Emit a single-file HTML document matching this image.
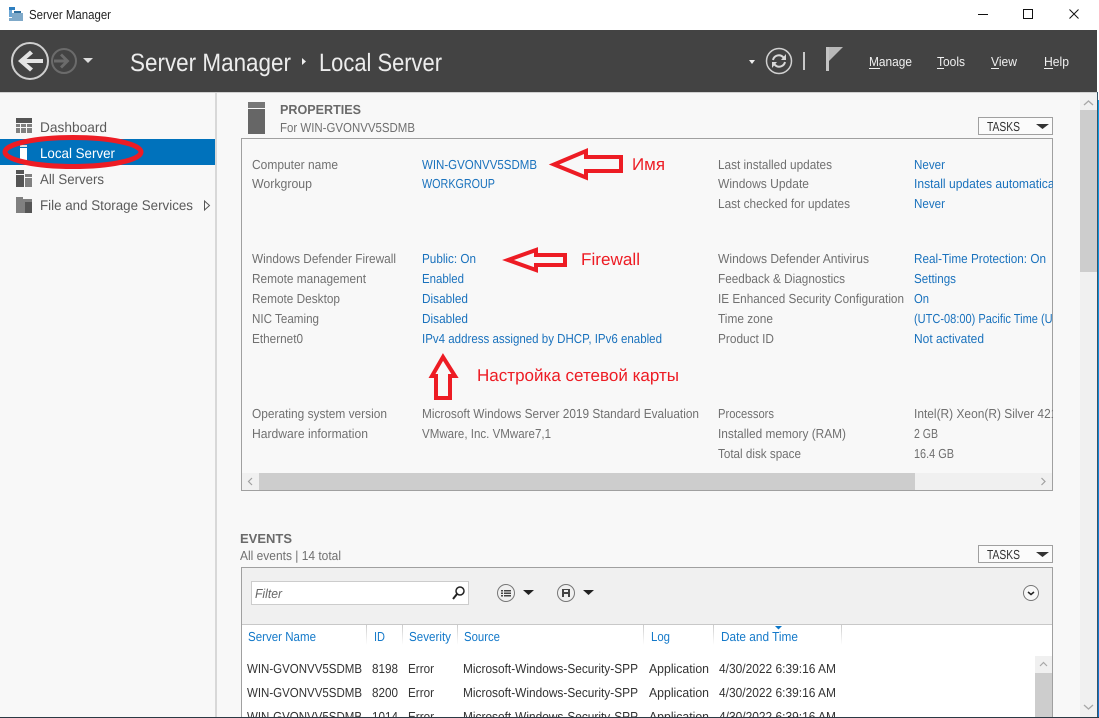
<!DOCTYPE html>
<html><head><meta charset="utf-8"><title>Server Manager</title>
<style>
html,body{margin:0;padding:0;background:#fff;width:1099px;height:718px;overflow:hidden}
svg{display:block}
text{font-family:"Liberation Sans","DejaVu Sans",sans-serif;font-size:13px;text-rendering:geometricPrecision}
.g{fill:#707070}.b{fill:#1a72bd}.d{fill:#333}.h{fill:#1479c9}
text.r{fill:#ed1c24;font-size:17px}
.a{fill:none;stroke:#ed1c24;stroke-width:4}
text.s{font-size:14px;fill:#5a5a5a}
</style></head><body>
<svg width="1099" height="718" viewBox="0 0 1099 718" xmlns="http://www.w3.org/2000/svg">
<defs><clipPath id="c"><rect x="242" y="139" width="811" height="334"/></clipPath>
<clipPath id="t"><rect x="242" y="626" width="793" height="91"/></clipPath>
<linearGradient id="f" x1="0" y1="0" x2="0" y2="1"><stop offset="0" stop-color="#ccc"/><stop offset="1" stop-color="#fff"/></linearGradient>
<linearGradient id="e" x1="0" y1="0" x2="0" y2="1"><stop offset="0" stop-color="#0aa0e8"/><stop offset="1" stop-color="#1470c8"/></linearGradient></defs>
<rect width="1099" height="718" fill="#fff"/>
<!-- title bar -->
<path d="M9 7h6v3h-6z" fill="#2f7fc0"/><path d="M9 10h3v7H9z" fill="#6aa5d4"/><path d="M12 13h11v8H9v-3h3z" fill="#7fa9c9"/><path d="M14 11h7v2h-7z" fill="#2f6f9f"/>
<text x="29" y="19" fill="#222" textLength="82" lengthAdjust="spacingAndGlyphs">Server Manager</text>
<path d="M978 14.500h10" stroke="#111" stroke-width="1"/>
<rect x="1023.500" y="9.500" width="9" height="9" fill="none" stroke="#111"/>
<path d="M1069.500 9.500l9 9M1078.500 9.500l-9 9" stroke="#111" fill="none"/>
<!-- header -->
<rect x="0" y="30" width="1097" height="62" fill="#434343"/>
<circle cx="30" cy="61" r="18" fill="none" stroke="#cfcfcf" stroke-width="2"/>
<path d="M18 61L30 50.500L33 53.500L26.500 59H43V63H26.500L33 68.500L30 71.500z" fill="#e4e4e4"/>
<circle cx="64" cy="61" r="12" fill="none" stroke="#6b6b6b" stroke-width="2"/>
<path d="M54 59.500h10l-4-4 2-2 7.500 7.500-7.500 7.500-2-2 4-4h-10z" fill="#6b6b6b"/>
<path d="M83 58h10l-5 5z" fill="#ddd"/>
<text x="130" y="71" fill="#ececec" style="font-size:25px" textLength="161" lengthAdjust="spacingAndGlyphs">Server Manager</text>
<path d="M302 58l4 3.500-4 3.500z" fill="#eee"/>
<text x="319" y="71" fill="#ececec" style="font-size:25px" textLength="123" lengthAdjust="spacingAndGlyphs">Local Server</text>
<path d="M749 60h6l-3 4z" fill="#eee"/>
<circle cx="779" cy="61" r="12.500" fill="none" stroke="#d0d0d0" stroke-width="1.500"/>
<path d="M773 60a6 6 0 0 1 10-3l2 2M785 62a6 6 0 0 1-10 3l-2-2" fill="none" stroke="#d8d8d8" stroke-width="2"/>
<path d="M786 54v6h-5zM772 68v-6h5z" fill="#d8d8d8"/>
<rect x="803" y="52" width="2" height="18" fill="#c8c8c8"/>
<rect x="826" y="47" width="3" height="24" fill="#c4c4c4"/><path d="M829 47h14l-14 14z" fill="#b8b8b8"/>
<g fill="#f0f0f0">
<text x="869" y="66" fill="#f0f0f0" textLength="43" lengthAdjust="spacingAndGlyphs">Manage</text>
<text x="937" y="66" fill="#f0f0f0" textLength="28" lengthAdjust="spacingAndGlyphs">Tools</text>
<text x="991" y="66" fill="#f0f0f0" textLength="26" lengthAdjust="spacingAndGlyphs">View</text>
<text x="1044" y="66" fill="#f0f0f0" textLength="25" lengthAdjust="spacingAndGlyphs">Help</text>
<rect x="869" y="68" width="11" height="1"/><rect x="937" y="68" width="7" height="1"/><rect x="991" y="68" width="8" height="1"/><rect x="1044" y="68" width="9" height="1"/>
</g>
<!-- sidebar -->
<rect x="0" y="92" width="215" height="626" fill="#f8f8f8"/>
<rect x="215" y="92" width="2" height="626" fill="#d8d8d8"/>
<rect x="217" y="92" width="880" height="626" fill="#f8f8f8"/>
<rect x="0" y="92" width="1097" height="1" fill="#d0d0d0"/>
<rect x="16" y="118" width="16" height="5" fill="#555"/><path d="M16 124h4v3h-4zM21 124h5v3h-5zM27 124h5v3h-5zM16 128h4v5h-4zM21 128h5v5h-5zM27 128h5v5h-5z" fill="#808080"/>
<rect x="0" y="139" width="215" height="26" fill="#0072bc"/>
<rect x="20" y="148" width="7" height="12" fill="#fff"/><rect x="20" y="145" width="7" height="2" fill="#e0e0e0"/>
<rect x="16" y="170" width="8" height="4" fill="#555"/><rect x="16" y="175" width="8" height="12" fill="#555"/><rect x="25" y="174" width="7" height="3" fill="#808080"/><rect x="25" y="178" width="7" height="9" fill="#808080"/>
<path d="M16 197h7v2h9v7h-7v7h-9z" fill="#808080"/><path d="M25 202h7v11h-7z" fill="#555"/>
<text class="s" x="40" y="132" textLength="67" lengthAdjust="spacingAndGlyphs">Dashboard</text>
<text x="40" y="158" style="font-size:14px" fill="#fff" textLength="75" lengthAdjust="spacingAndGlyphs">Local Server</text>
<text class="s" x="40" y="184" textLength="64" lengthAdjust="spacingAndGlyphs">All Servers</text>
<text class="s" x="40" y="210" textLength="153" lengthAdjust="spacingAndGlyphs">File and Storage Services</text>
<path d="M204.500 201l5 4.500-5 4.500z" fill="none" stroke="#555"/>
<ellipse cx="73" cy="152" rx="68" ry="14.500" fill="none" stroke="#ed1c24" stroke-width="5"/>
<!-- main scrollbar -->
<rect x="1080" y="93" width="17" height="625" fill="#f0f0f0"/>
<rect x="1080" y="110" width="17" height="162" fill="#cdcdcd"/>
<path d="M1084 105l4.500-4 4.500 4M1084 705l4.500 4 4.500-4" fill="none" stroke="#a8a8a8" stroke-width="1.300"/>
<!-- properties -->
<rect x="248" y="102" width="17" height="6" fill="#777"/><rect x="248" y="109" width="17" height="25" fill="#666"/>
<text x="280" y="114" fill="#6a6a6a" font-weight="bold" textLength="81" lengthAdjust="spacingAndGlyphs">PROPERTIES</text>
<text class="g" x="280" y="132" textLength="135" lengthAdjust="spacingAndGlyphs">For WIN-GVONVV5SDMB</text>
<rect x="978.500" y="117.500" width="74" height="17" fill="#fbfbfb" stroke="#a0a0a0"/>
<text x="987" y="131" fill="#333" textLength="33" lengthAdjust="spacingAndGlyphs">TASKS</text>
<path d="M1036 124h13l-6.500 5z" fill="#333"/>
<rect x="241.500" y="138.500" width="811" height="352" fill="#f8f8f8" stroke="#a0a0a0"/>
<g clip-path="url(#c)">
<text class="g" x="252" y="169" textLength="86" lengthAdjust="spacingAndGlyphs">Computer name</text>
<text class="g" x="252" y="188" textLength="60" lengthAdjust="spacingAndGlyphs">Workgroup</text>
<text class="g" x="252" y="263" textLength="144" lengthAdjust="spacingAndGlyphs">Windows Defender Firewall</text>
<text class="g" x="252" y="283" textLength="114" lengthAdjust="spacingAndGlyphs">Remote management</text>
<text class="g" x="252" y="303" textLength="88" lengthAdjust="spacingAndGlyphs">Remote Desktop</text>
<text class="g" x="252" y="323" textLength="67" lengthAdjust="spacingAndGlyphs">NIC Teaming</text>
<text class="g" x="252" y="343" textLength="51" lengthAdjust="spacingAndGlyphs">Ethernet0</text>
<text class="g" x="252" y="418" textLength="135" lengthAdjust="spacingAndGlyphs">Operating system version</text>
<text class="g" x="252" y="438" textLength="116" lengthAdjust="spacingAndGlyphs">Hardware information</text>
<text class="b" x="422" y="169" textLength="115" lengthAdjust="spacingAndGlyphs">WIN-GVONVV5SDMB</text>
<text class="b" x="422" y="188" textLength="73" lengthAdjust="spacingAndGlyphs">WORKGROUP</text>
<text class="b" x="422" y="263" textLength="54" lengthAdjust="spacingAndGlyphs">Public: On</text>
<text class="b" x="422" y="283" textLength="42" lengthAdjust="spacingAndGlyphs">Enabled</text>
<text class="b" x="422" y="303" textLength="46" lengthAdjust="spacingAndGlyphs">Disabled</text>
<text class="b" x="422" y="323" textLength="46" lengthAdjust="spacingAndGlyphs">Disabled</text>
<text class="b" x="422" y="343" textLength="240" lengthAdjust="spacingAndGlyphs">IPv4 address assigned by DHCP, IPv6 enabled</text>
<text class="g" x="422" y="418" textLength="277" lengthAdjust="spacingAndGlyphs">Microsoft Windows Server 2019 Standard Evaluation</text>
<text class="g" x="422" y="438" textLength="129" lengthAdjust="spacingAndGlyphs">VMware, Inc. VMware7,1</text>
<text class="g" x="718" y="169" textLength="114" lengthAdjust="spacingAndGlyphs">Last installed updates</text>
<text class="g" x="718" y="188" textLength="91" lengthAdjust="spacingAndGlyphs">Windows Update</text>
<text class="g" x="718" y="208" textLength="132" lengthAdjust="spacingAndGlyphs">Last checked for updates</text>
<text class="g" x="718" y="263" textLength="151" lengthAdjust="spacingAndGlyphs">Windows Defender Antivirus</text>
<text class="g" x="718" y="283" textLength="127" lengthAdjust="spacingAndGlyphs">Feedback &amp; Diagnostics</text>
<text class="g" x="718" y="303" textLength="186" lengthAdjust="spacingAndGlyphs">IE Enhanced Security Configuration</text>
<text class="g" x="718" y="323" textLength="55" lengthAdjust="spacingAndGlyphs">Time zone</text>
<text class="g" x="718" y="343" textLength="56" lengthAdjust="spacingAndGlyphs">Product ID</text>
<text class="g" x="718" y="418" textLength="56" lengthAdjust="spacingAndGlyphs">Processors</text>
<text class="g" x="718" y="438" textLength="128" lengthAdjust="spacingAndGlyphs">Installed memory (RAM)</text>
<text class="g" x="718" y="458" textLength="83" lengthAdjust="spacingAndGlyphs">Total disk space</text>
<text class="b" x="914" y="169" textLength="31" lengthAdjust="spacingAndGlyphs">Never</text>
<text class="b" x="914" y="188" textLength="152" lengthAdjust="spacingAndGlyphs">Install updates automatically</text>
<text class="b" x="914" y="208" textLength="31" lengthAdjust="spacingAndGlyphs">Never</text>
<text class="b" x="914" y="263" textLength="132" lengthAdjust="spacingAndGlyphs">Real-Time Protection: On</text>
<text class="b" x="914" y="283" textLength="42" lengthAdjust="spacingAndGlyphs">Settings</text>
<text class="b" x="914" y="303" textLength="15" lengthAdjust="spacingAndGlyphs">On</text>
<text class="b" x="914" y="323" textLength="146" lengthAdjust="spacingAndGlyphs">(UTC-08:00) Pacific Time (US</text>
<text class="b" x="914" y="343" textLength="70" lengthAdjust="spacingAndGlyphs">Not activated</text>
<text class="g" x="914" y="418" textLength="150" lengthAdjust="spacingAndGlyphs">Intel(R) Xeon(R) Silver 4214</text>
<text class="g" x="914" y="438" textLength="24" lengthAdjust="spacingAndGlyphs">2 GB</text>
<text class="g" x="914" y="458" textLength="40" lengthAdjust="spacingAndGlyphs">16.4 GB</text>
</g>
<rect x="242" y="473" width="810" height="17" fill="#f0f0f0"/>
<rect x="259" y="473" width="656" height="17" fill="#cdcdcd"/>
<path d="M252 478l-3.500 3.500 3.500 3.500M1041.500 478l3.500 3.500-3.500 3.500" fill="none" stroke="#a0a0a0" stroke-width="1.200"/>
<!-- annotations -->
<path class="a" d="M554 164.500L586 151V157H621V171H586V177.500z"/>
<path class="a" d="M508 260L536 250V255H565V265H536V270z"/>
<path class="a" d="M443 357L432 376H436V398H450V376H455z"/>
<text class="r" x="632" y="170" textLength="33" lengthAdjust="spacingAndGlyphs">Имя</text>
<text class="r" x="581" y="265" textLength="59" lengthAdjust="spacingAndGlyphs">Firewall</text>
<text class="r" x="477" y="381" textLength="202" lengthAdjust="spacingAndGlyphs">Настройка сетевой карты</text>
<!-- events -->
<text x="240" y="543" fill="#6a6a6a" font-weight="bold" textLength="52" lengthAdjust="spacingAndGlyphs">EVENTS</text>
<text class="g" x="240" y="560" textLength="101" lengthAdjust="spacingAndGlyphs">All events | 14 total</text>
<rect x="978.500" y="545.500" width="74" height="17" fill="#fbfbfb" stroke="#a0a0a0"/>
<text x="987" y="559" fill="#333" textLength="33" lengthAdjust="spacingAndGlyphs">TASKS</text>
<path d="M1036 552h13l-6.500 5z" fill="#333"/>
<rect x="241.500" y="567.500" width="811" height="160" fill="#fff" stroke="#a0a0a0"/>
<rect x="242" y="568" width="810" height="57" fill="#f0f0f0"/>
<rect x="242" y="624" width="810" height="1" fill="#c8c8c8"/>
<rect x="251.500" y="581.500" width="217" height="23" fill="#fff" stroke="#ccc"/>
<text x="255" y="598" fill="#666" font-style="italic" textLength="27" lengthAdjust="spacingAndGlyphs">Filter</text>
<circle cx="460" cy="591" r="4" fill="none" stroke="#222" stroke-width="1.500"/><path d="M457 594l-4 5" stroke="#222" stroke-width="2"/>
<circle cx="506" cy="593" r="8.500" fill="none" stroke="#777"/><path d="M501 590h2v1.500h-2zM504 590h7v1.500h-7zM501 592.500h2v1.500h-2zM504 592.500h7v1.500h-7zM501 595h2v1.500h-2zM504 595h7v1.500h-7z" fill="#444"/>
<path d="M523 590h11l-5.500 5z" fill="#222"/>
<circle cx="566" cy="593" r="8.500" fill="none" stroke="#777"/><path d="M562 589h8v8h-8z" fill="#444"/><path d="M564 590h4v2h-4zM564 594h4v3h-4z" fill="#f0f0f0"/>
<path d="M583 590h11l-5.500 5z" fill="#222"/>
<circle cx="1031" cy="593" r="7.500" fill="#f8f8f8" stroke="#777"/><path d="M1028 592l3 2.500 3-2.500" fill="none" stroke="#222" stroke-width="1.500"/>
<g fill="url(#f)">
<rect x="366" y="625" width="1" height="20"/><rect x="402" y="625" width="1" height="20"/><rect x="457" y="625" width="1" height="20"/><rect x="643" y="625" width="1" height="20"/><rect x="713" y="625" width="1" height="20"/><rect x="841" y="625" width="1" height="20"/>
</g>
<text class="h" x="248" y="641" textLength="68" lengthAdjust="spacingAndGlyphs">Server Name</text>
<text class="h" x="374" y="641" textLength="11" lengthAdjust="spacingAndGlyphs">ID</text>
<text class="h" x="409" y="641" textLength="42" lengthAdjust="spacingAndGlyphs">Severity</text>
<text class="h" x="464" y="641" textLength="36" lengthAdjust="spacingAndGlyphs">Source</text>
<text class="h" x="651" y="641" textLength="19" lengthAdjust="spacingAndGlyphs">Log</text>
<text class="h" x="721" y="641" textLength="77" lengthAdjust="spacingAndGlyphs">Date and Time</text>
<path d="M775 626h7l-3.500 3.500z" fill="#0b76c8"/>
<g clip-path="url(#t)">
<text class="d" x="247" y="673" textLength="115" lengthAdjust="spacingAndGlyphs">WIN-GVONVV5SDMB</text><text class="d" x="372" y="673" textLength="26" lengthAdjust="spacingAndGlyphs">8198</text><text class="d" x="408" y="673" textLength="26" lengthAdjust="spacingAndGlyphs">Error</text><text class="d" x="463" y="673" textLength="175" lengthAdjust="spacingAndGlyphs">Microsoft-Windows-Security-SPP</text><text class="d" x="649" y="673" textLength="60" lengthAdjust="spacingAndGlyphs">Application</text><text class="d" x="719" y="673" textLength="117" lengthAdjust="spacingAndGlyphs">4/30/2022 6:39:16 AM</text>
<text class="d" x="247" y="697" textLength="115" lengthAdjust="spacingAndGlyphs">WIN-GVONVV5SDMB</text><text class="d" x="372" y="697" textLength="26" lengthAdjust="spacingAndGlyphs">8200</text><text class="d" x="408" y="697" textLength="26" lengthAdjust="spacingAndGlyphs">Error</text><text class="d" x="463" y="697" textLength="175" lengthAdjust="spacingAndGlyphs">Microsoft-Windows-Security-SPP</text><text class="d" x="649" y="697" textLength="60" lengthAdjust="spacingAndGlyphs">Application</text><text class="d" x="719" y="697" textLength="117" lengthAdjust="spacingAndGlyphs">4/30/2022 6:39:16 AM</text>
<text class="d" x="247" y="721" textLength="115" lengthAdjust="spacingAndGlyphs">WIN-GVONVV5SDMB</text><text class="d" x="372" y="721" textLength="26" lengthAdjust="spacingAndGlyphs">1014</text><text class="d" x="408" y="721" textLength="26" lengthAdjust="spacingAndGlyphs">Error</text><text class="d" x="463" y="721" textLength="175" lengthAdjust="spacingAndGlyphs">Microsoft-Windows-Security-SPP</text><text class="d" x="649" y="721" textLength="60" lengthAdjust="spacingAndGlyphs">Application</text><text class="d" x="719" y="721" textLength="117" lengthAdjust="spacingAndGlyphs">4/30/2022 6:39:16 AM</text>
</g>
<rect x="1035" y="656" width="17" height="62" fill="#f0f0f0"/>
<rect x="1035" y="673" width="17" height="45" fill="#cdcdcd"/>
<path d="M1040 666l3.500-3.500 3.500 3.500" fill="none" stroke="#a8a8a8" stroke-width="1.200"/>
<!-- window edges -->
<rect x="1097" y="0" width="2" height="718" fill="#fff"/>
<rect x="1097" y="92" width="1" height="626" fill="#35556a"/>
<rect x="1098" y="100" width="1" height="618" fill="url(#e)"/>
<rect x="0" y="717" width="1099" height="1" fill="#2b3a44"/>
</svg>
</body></html>
